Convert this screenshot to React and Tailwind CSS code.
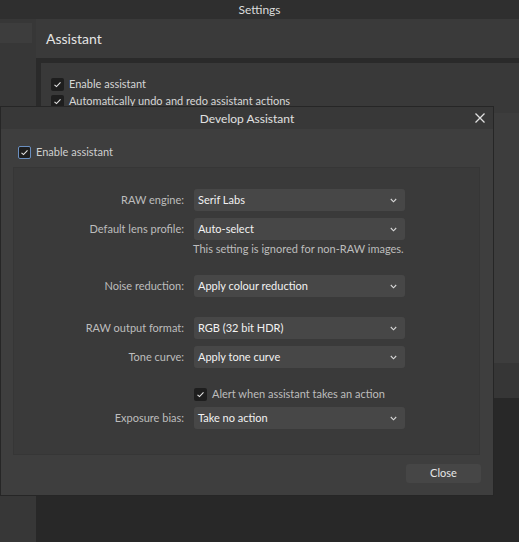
import React from "react";

const font = { fontFamily: 'Lato, "Noto Sans", sans-serif' };

const Check = ({ focused }) => (
  <span
    className={`flex h-[13px] w-[13px] shrink-0 items-center justify-center rounded-[2px] bg-[#1e1e1e] ${
      focused ? "border border-[#6a8fc0]" : ""
    }`}
  >
    <svg width="9" height="9" viewBox="0 0 9 9" fill="none">
      <path d="M1.5 4.8 L3.5 6.6 L7.5 2.4" stroke="#e6e6e6" strokeWidth="1.1" />
    </svg>
  </span>
);

const Select = ({ value }) => (
  <div className="flex h-[22px] w-[211px] items-center justify-between rounded-[3px] bg-[#474747] pl-[4px] pr-[8px] text-[11px] text-[#f2f2f2]">
    <span>{value}</span>
    <svg width="7" height="5" viewBox="0 0 7 5" fill="none">
      <path d="M0.8 1 L3.5 3.8 L6.2 1" stroke="#d8d8d8" strokeWidth="1.1" />
    </svg>
  </div>
);

const Row = ({ label, value, className = "" }) => (
  <div className={`flex h-[22px] items-center ${className}`}>
    <div className="w-[171px] pr-[1px] text-right text-[11px] text-[#bdbdbd]">{label}</div>
    <div className="ml-[9px]">
      <Select value={value} />
    </div>
  </div>
);

export default function App() {
  return (
    <div className="relative h-[542px] w-[519px] overflow-hidden bg-[#282828]" style={font}>
      {/* settings window behind */}
      <div className="flex h-[19px] items-center justify-center bg-[#2f2f2f] text-[12px] text-[#dcdcdc]">
        Settings
      </div>
      <div className="flex h-[523px]">
        <div className="flex w-[36px] flex-col bg-[#373737] pt-[4px]">
          <div className="h-[20px] w-[32px] bg-[#3d3d3d]" />
        </div>
        <div className="flex flex-1 flex-col">
          <div className="flex h-[39px] items-center bg-[#3a3a3a] pl-[10px] text-[14px] text-[#e4e4e4]">
            Assistant
          </div>
          <div className="bg-[#2a2a2a] pl-[5px] pt-[5px]">
            <div className="bg-[#393939]">
              <div className="flex h-[50px] flex-col gap-[4px] pl-[10px] pt-[15px] text-[11px] text-[#d6d6d6]">
                <div className="flex h-[13px] items-center gap-[5px]">
                  <Check />
                  <span>Enable assistant</span>
                </div>
                <div className="flex h-[13px] items-center gap-[5px]">
                  <Check />
                  <span>Automatically undo and redo assistant actions</span>
                </div>
              </div>
              <div className="h-[250px] bg-[#3d3d3d]" />
            </div>
            <div className="h-[35px] bg-[#363636]" />
          </div>
        </div>
      </div>

      {/* develop assistant dialog */}
      <div className="absolute left-0 top-[106px] flex h-[390px] w-[494px] flex-col border border-[#262626] bg-[#3e3e3e]">
        <div className="relative flex h-[22px] items-center justify-center bg-[#383838] pt-[1px] text-[12px] text-[#e0e0e0]">
          Develop Assistant
          <svg
            className="absolute right-[8px] top-[6px]"
            width="10"
            height="10"
            viewBox="0 0 10 10"
            fill="none"
          >
            <path d="M0.5 0.5 L9.5 9.5 M9.5 0.5 L0.5 9.5" stroke="#e0e0e0" strokeWidth="1.3" />
          </svg>
        </div>
        <div className="flex flex-1 flex-col px-[12px]">
          <div className="mt-[17px] flex h-[13px] items-center gap-[5px] pl-[5px] text-[11px] text-[#cfcfcf]">
            <Check focused />
            <span>Enable assistant</span>
          </div>
          <div className="mt-[8px] flex h-[288px] w-[467px] flex-col border border-[#363636] bg-[#3a3a3a]">
            <Row className="mt-[21px]" label="RAW engine:" value="Serif Labs" />
            <Row className="mt-[7px]" label="Default lens profile:" value="Auto-select" />
            <div className="ml-[179px] mt-[1px] h-[16px] text-[11px] leading-[16px] text-[#bdbdbd]">
              This setting is ignored for non-RAW images.
            </div>
            <Row className="mt-[18px]" label="Noise reduction:" value="Apply colour reduction" />
            <Row className="mt-[20px]" label="RAW output format:" value="RGB (32 bit HDR)" />
            <Row className="mt-[7px]" label="Tone curve:" value="Apply tone curve" />
            <div className="ml-[180px] mt-[18px] flex h-[16px] items-center gap-[5px] text-[11px] text-[#bdbdbd]">
              <Check />
              <span>Alert when assistant takes an action</span>
            </div>
            <Row className="mt-[5px]" label="Exposure bias:" value="Take no action" />
          </div>
          <div className="mt-[9px] flex justify-end">
            <button className="h-[19px] w-[75px] rounded-[3px] bg-[#464646] text-[11px] text-[#e6e6e6]">
              Close
            </button>
          </div>
        </div>
      </div>
    </div>
  );
}
